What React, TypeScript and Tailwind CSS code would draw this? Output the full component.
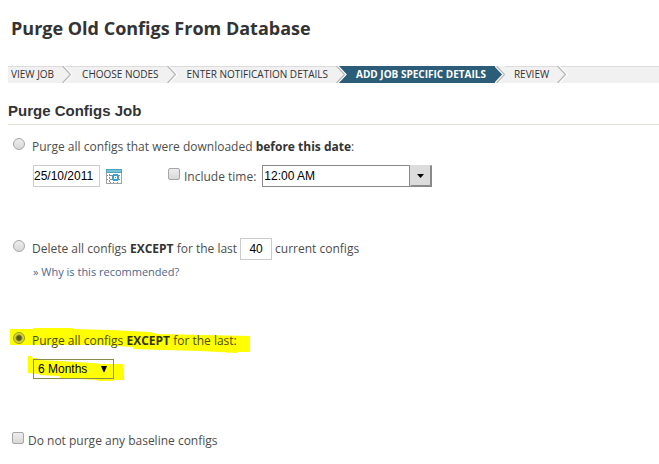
import { useState } from "react";
import type { InputHTMLAttributes } from "react";
import clsx from "clsx";

type PurgeMode = "before-date" | "keep-count" | "keep-period";

const steps = ["View Job", "Choose Nodes", "Enter Notification Details", "Add Job Specific Details", "Review"];
const activeStep = 3;

const arial = "font-['Liberation_Sans',sans-serif] text-black";

function StepArrow({ before, after }: { before: boolean; after: boolean }) {
  return (
    <svg width="11" height="17" viewBox="0 0 11 17" className="shrink-0" aria-hidden="true">
      {!before && !after && <path d="M0 0.5H11" stroke="#dcdcdc" />}
      {before && <path d="M0 0H1L9 8.5L1 17H0Z" fill="#2b5c78" />}
      {after && <path d="M2 0H11V17H2L10 8.5Z" fill="#2b5c78" />}
      <path d="M1.5 0L9.5 8.5L1.5 17" fill="none" stroke="#fff" strokeWidth="2" />
      <path
        d={before ? "M2.5 0L10.5 8.5L2.5 17" : "M0.5 0L8.5 8.5L0.5 17"}
        fill="none"
        stroke="#b5b5b5"
        strokeWidth="1.2"
      />
    </svg>
  );
}

function Steps() {
  return (
    <nav aria-label="Job steps" className="mt-[26px] ml-2 bg-[#f1f1f1] text-[#333]">
      <ol className="flex h-[17px] text-[10px] leading-[17px] uppercase">
        {steps.map((step, index) => {
          const active = index === activeStep;
          return (
            <li key={step} aria-current={active ? "step" : undefined} className="flex whitespace-nowrap">
              <span
                className={clsx(
                  "pr-2",
                  index === 0 ? "pl-[3px]" : "pl-[9px]",
                  active ? "bg-[#2b5c78] font-bold text-white" : "border-t border-[#dcdcdc] leading-[15px]",
                )}
              >
                {step}
              </span>
              <StepArrow before={active} after={index + 1 === activeStep} />
            </li>
          );
        })}
        <li aria-hidden="true" className="grow border-t border-[#dcdcdc]" />
      </ol>
    </nav>
  );
}

function Radio(props: InputHTMLAttributes<HTMLInputElement>) {
  return (
    <input
      type="radio"
      name="purge-mode"
      className="mb-1.5 size-3 shrink-0 appearance-none rounded-full border border-[#a6a6a6] bg-linear-to-b from-[#ededed] to-[#d8d8d8] checked:border-[#9a9a00] checked:bg-[radial-gradient(circle,#55551c_0_2px,#d8d83c_4px)]"
      {...props}
    />
  );
}

function Checkbox(props: InputHTMLAttributes<HTMLInputElement>) {
  return (
    <input
      type="checkbox"
      className="mb-1.5 size-3 shrink-0 appearance-none rounded-xs border border-[#a6a6a6] bg-linear-to-b from-[#ededed] to-[#d8d8d8] checked:bg-[#777]"
      {...props}
    />
  );
}

function CalendarIcon() {
  return (
    <svg width="16" height="15" viewBox="0 0 16 15" aria-hidden="true">
      <path d="M0 0H16V15H0Z" fill="#a2a2a2" />
      <path d="M0 0H16V4H0Z" fill="#4ba3bd" />
      <path d="M1 1H15V3H1Z" fill="#79c3d6" />
      <path d="M1 4H15V14H1Z" fill="#fff" />
      <path
        d="M1 6h1v1H1zM4 6h2v1H4zM1 10h1v1H1zM4 10h2v1H4zM3 5h1v2H3zM3 8h1v2H3zM3 11h1v2H3zM13 6h1v1h-1zM13 10h1v1h-1zM7 13h1v1H7zM11 13h1v1h-1zM4 13h1v1H4z"
        fill="#8a8a8a"
      />
      <path d="M7 5H12V6H13V11H12V12H7V11H6V6H7Z" fill="#3ba0cb" />
      <path d="M8 7H11V10H8Z" fill="#fff" />
      <path d="M9 8H10V9H9Z" fill="#3ba0cb" />
    </svg>
  );
}

export default function App() {
  const [mode, setMode] = useState<PurgeMode>("keep-period");

  return (
    <main className="min-h-screen bg-white pt-4 font-['Open_Sans',sans-serif] text-xs leading-5 text-[#4d4d4d]">
      <h1 className="pl-[11px] text-lg leading-6 font-bold text-[#333]">Purge Old Configs From Database</h1>
      <Steps />

      <form className="ml-2" onSubmit={(event) => event.preventDefault()}>
        <h2 className="mt-4 border-b border-[#e2e1d4] pb-px font-['Liberation_Sans',sans-serif] text-[15px] leading-6 font-bold text-[#333]">
          Purge Configs Job
        </h2>

        <section className="mt-3 pl-[5px]">
          <label className="flex items-center gap-[7px]">
            <Radio checked={mode === "before-date"} onChange={() => setMode("before-date")} />
            <span>
              Purge all configs that were downloaded <b className="text-[#333]">before this date</b>:
            </span>
          </label>
          <div className="mt-2 flex items-center pl-5">
            <input
              aria-label="Date"
              defaultValue="25/10/2011"
              className={clsx(arial, "h-[22px] w-[67px] border border-[#ccc] text-xs")}
            />
            <button type="button" aria-label="Pick a date" className="ml-[6px]">
              <CalendarIcon />
            </button>
            <label className="ml-[46px] flex items-center gap-1 pt-px">
              <Checkbox />
              Include time:
            </label>
            <div className="ml-[6px] flex h-[22px]">
              <input
                aria-label="Time"
                defaultValue="12:00 AM"
                className={clsx(arial, "w-[148px] border border-[#8a8a8a] pl-px text-xs")}
              />
              <button
                type="button"
                aria-label="Show times"
                className="flex w-[22px] items-center justify-center border border-r-2 border-b-2 border-[#8a8a8a] border-t-[#dcdcdc] border-l-[#dcdcdc] bg-[#dcdcdc]"
              >
                <svg width="7" height="4" viewBox="0 0 7 4" aria-hidden="true">
                  <path d="M0 0H7L3.5 4Z" fill="#000" />
                </svg>
              </button>
            </div>
          </div>
        </section>

        <section className="mt-[51px] pl-[5px]">
          <div className="flex items-center">
            <label className="flex items-center gap-[7px]">
              <Radio checked={mode === "keep-count"} onChange={() => setMode("keep-count")} />
              <span>
                Delete all configs <b className="text-[#333]">EXCEPT</b> for the last
              </span>
            </label>
            <input
              aria-label="Number of configs to keep"
              defaultValue="40"
              className={clsx(arial, "mx-[3px] h-[22px] w-8 border border-[#ccc] text-center text-xs")}
            />
            current configs
          </div>
          <a href="#recommendation" className="mt-0.5 ml-5 block w-fit text-[11px] text-[#4f6690]">
            » Why is this recommended?
          </a>
        </section>

        <section className="relative isolate mt-[49px] pl-[5px]">
          {/* marker strokes behind the selected option */}
          <svg
            width="240"
            height="54"
            viewBox="10 328 240 54"
            className="absolute -top-[3px] left-[2px] -z-10"
            aria-hidden="true"
          >
            <path
              d="M10 329H33V328H73V329L110 330L150 332L157 334L250 336V352H237V353L200 351L165 350L133 349V347L100 345H10Z"
              fill="#ff0"
            />
            <path
              d="M28 356H32V358H37V360L60 361L92 363L102 364H123V367H124V380H113V381H97V380L60 378V376L40 375V374L28 373Z"
              fill="#ff0"
            />
          </svg>
          <label className="flex items-center gap-[7px]">
            <Radio checked={mode === "keep-period"} onChange={() => setMode("keep-period")} />
            <span className="text-[#4d4d00]">
              Purge all configs <b className="text-[#333300]">EXCEPT</b> for the last:
            </span>
          </label>
          <div className="relative mt-2 ml-5 w-[81px]">
            <select
              aria-label="Period to keep"
              className={clsx(arial, "block h-5 w-full appearance-none border border-[#8a8a50] pl-1 text-xs")}
            >
              <option>6 Months</option>
            </select>
            <svg
              width="6"
              height="6"
              viewBox="0 0 6 6"
              className="pointer-events-none absolute top-[7px] right-[7px]"
              aria-hidden="true"
            >
              <path d="M0 0H6L3.5 6H2.5Z" fill="#000" />
            </svg>
          </div>
        </section>

        <label className="mt-[52px] ml-1 flex items-center gap-1">
          <Checkbox />
          Do not purge any baseline configs
        </label>
      </form>
    </main>
  );
}
